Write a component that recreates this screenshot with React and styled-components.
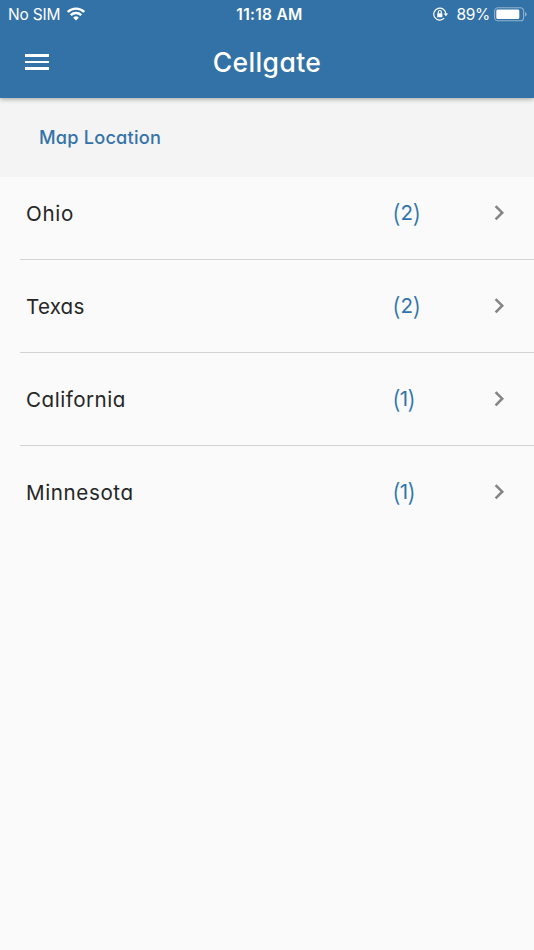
import React from 'react'
import styled, { createGlobalStyle } from 'styled-components'

const locations = [
  { name: 'Ohio', count: 2, spacing: '0.7px' },
  { name: 'Texas', count: 2, spacing: '0.2px' },
  { name: 'California', count: 1, spacing: '0.5px' },
  { name: 'Minnesota', count: 1, spacing: '0.6px' },
]

function StatusBar() {
  return (
    <Status>
      <div className='carrier'>
        <span>No SIM</span>
        <svg width='18' height='14' viewBox='0 0 18 14' fill='none' stroke='#fff' strokeWidth='2.4'>
          <path d='M0.8 5a11.6 11.6 0 0 1 16.4 0' />
          <path d='M3.8 8.2a7.4 7.4 0 0 1 10.4 0' />
          <path d='M9 13.6 6.2 10.7a4 4 0 0 1 5.6 0z' fill='#fff' stroke='none' />
        </svg>
      </div>
      <span className='time'>11:18 AM</span>
      <div className='battery'>
        <svg width='16' height='14' viewBox='0 0 16 14' fill='none' stroke='#fff' strokeWidth='1.2'>
          <path d='M11.2 11.2A6 6 0 1 1 12.8 7' />
          <path d='M10.6 6.5h4.6l-2.3 2.8z' fill='#fff' stroke='none' />
          <rect x='4.2' y='6.2' width='5.2' height='4' rx='0.5' fill='#fff' stroke='none' />
          <path d='M5.3 6.4V5a1.5 1.5 0 0 1 3 0v1.4' />
        </svg>
        <span>89%</span>
        <svg width='33' height='15' viewBox='0 0 33 15'>
          <rect x='0.6' y='0.8' width='29' height='13' rx='3.4' fill='none' stroke='#91b4d0' strokeWidth='1.1' />
          <rect x='2.3' y='2.5' width='23' height='9.6' rx='1.4' fill='#fff' />
          <path d='M31 5v4.6q1.6-.6 1.6-2.3T31 5z' fill='#91b4d0' />
        </svg>
      </div>
    </Status>
  )
}

function App() {
  return (
    <Wrapper>
      <GlobalStyle />
      <Header>
        <StatusBar />
        <Toolbar>
          <MenuButton aria-label='Menu'>
            <span />
            <span />
            <span />
          </MenuButton>
          <h1>Cellgate</h1>
        </Toolbar>
      </Header>
      <SectionTitle>Map Location</SectionTitle>
      <List>
        {locations.map(({ name, count, spacing }) => (
          <Row key={name}>
            <Name $spacing={spacing}>{name}</Name>
            <Count $narrow={count === 1}>
              <i>(</i>
              {count}
              <i>)</i>
            </Count>
            <svg width='12' height='16' viewBox='0 0 12 16' fill='none' stroke='#858585' strokeWidth='2.6'>
              <path d='M1.6 1.1 8.2 7.7 1.6 14.3' />
            </svg>
          </Row>
        ))}
      </List>
    </Wrapper>
  )
}

const GlobalStyle = createGlobalStyle`
  * {
    box-sizing: border-box;
  }
  body {
    margin: 0;
    background: #fafafa;
  }
`

const Wrapper = styled.main`
  min-height: 950px;
  background: #fafafa;
  font-family: Inter, 'Liberation Sans', sans-serif;
  /* single-storey a */
  font-feature-settings: 'cv11' 1, 'calt' 0;
`

const Header = styled.header`
  position: relative;
  height: 98px;
  background: #3372a6;
  color: #fff;
  box-shadow: 0 1px 5px rgba(0, 0, 0, 0.35);
`

const Status = styled.div`
  display: grid;
  grid-template-columns: 1fr auto 1fr;
  height: 27px;
  padding: 0 7px 0 8px;
  align-items: center;
  font-size: 15.5px;
  line-height: 27px;
  font-feature-settings: normal;

  .carrier,
  .battery {
    display: flex;
    align-items: center;
  }
  .carrier {
    gap: 7px;
    letter-spacing: -0.2px;
    span {
      padding-top: 1px;
    }
  }
  .time {
    padding: 1px 0 0 4px;
    font-weight: 600;
    letter-spacing: 0.3px;
  }
  .battery {
    justify-content: flex-end;
    span {
      margin: 1px 4px 0 7px;
      letter-spacing: -0.3px;
    }
  }
`

const Toolbar = styled.div`
  display: grid;
  grid-template-columns: 1fr auto 1fr;
  height: 70px;
  padding: 0 24px;
  align-items: center;

  h1 {
    margin: 0;
    font-size: 26.5px;
    font-weight: 500;
    line-height: 36px;
    letter-spacing: 0.4px;
  }
`

const MenuButton = styled.button`
  display: flex;
  flex-direction: column;
  gap: 4px;
  width: 24px;
  margin-left: 0.5px;
  padding: 0;
  border: 0;
  background: none;

  span {
    width: 24px;
    height: 2.7px;
    background: #fff;
  }
`

const SectionTitle = styled.h2`
  height: 79px;
  margin: 0;
  padding: 0 39px;
  background: #f4f4f4;
  color: #3473a8;
  font-size: 18.2px;
  font-weight: 500;
  line-height: 79px;
  letter-spacing: 0.2px;
`

const List = styled.ul`
  margin: 0;
  padding: 0 0 0 20px;
  list-style: none;
`

const Row = styled.li`
  display: grid;
  grid-template-columns: 367px 101px 12px;
  height: 93px;
  padding-left: 6px;
  align-items: center;
  border-bottom: 1px solid #d2d2d2;

  &:first-child {
    height: 83px;
    padding-bottom: 10px;
  }
  &:last-child {
    border-bottom-color: transparent;
  }
`

const Name = styled.span`
  padding-top: 1px;
  color: #262626;
  font-size: 20.6px;
  line-height: 30px;
  letter-spacing: ${(props) => props.$spacing};
`

const Count = styled.span`
  display: flex;
  align-items: center;
  margin-left: -1px;
  color: #2f74ac;
  font-size: 20.5px;
  line-height: 30px;
  letter-spacing: ${(props) => (props.$narrow ? '-0.9px' : '-0.3px')};

  i {
    padding-bottom: 1px;
    font-size: 25px;
    font-style: normal;
    font-weight: 300;
  }
`

export default App
